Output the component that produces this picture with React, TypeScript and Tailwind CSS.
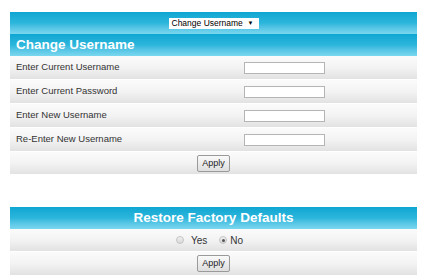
import { useState } from "react";

const rowBg = "bg-gradient-to-b from-[#fbfbfb] via-[#f3f3f3] to-[#e2e2e2] border-b border-white";
const barBg = "bg-gradient-to-b from-[#0ca6d2] via-[#2bb6dc] to-[#7bd7ef]";

const fields = [
  "Enter Current Username",
  "Enter Current Password",
  "Enter New Username",
  "Re-Enter New Username",
];

const ApplyButton = () => (
  <button
    type="button"
    className="h-[17px] px-[4px] text-[9px] text-[#222] border border-[#9a9a9a] rounded-[2px] bg-gradient-to-b from-[#fafafa] to-[#dedede] leading-none"
  >
    Apply
  </button>
);

const Radio = ({ checked }: { checked: boolean }) => (
  <span className="w-[8px] h-[8px] rounded-full border border-[#c4c4c4] bg-gradient-to-b from-[#f0f0f0] to-[#d8d8d8] flex items-center justify-center">
    {checked && <span className="w-[3px] h-[3px] rounded-full bg-[#555]" />}
  </span>
);

export default function App() {
  const [restore, setRestore] = useState("no");

  return (
    <div className="w-[431px] h-[280px] bg-white pt-[12px] pl-[10px] font-['Liberation_Sans',Arial,sans-serif] overflow-hidden">
      <div className="w-[407px]">
        {/* Page selector */}
        <div className={`h-[22px] flex items-center justify-center ${barBg}`}>
          <div className="w-[90px] h-[11px] bg-white flex items-center justify-between pl-[3px] pr-[5px] text-[8.5px] text-black leading-none">
            <span>Change Username</span>
            <span className="text-[6px]">▼</span>
          </div>
        </div>
        {/* Section title */}
        <div className={`h-[22px] flex items-center pl-[6px] ${barBg}`}>
          <span className="text-white font-bold text-[13.5px] leading-none">Change Username</span>
        </div>

        {fields.map((label) => (
          <div key={label} className={`h-[24px] flex items-center ${rowBg}`}>
            <span className="w-[234px] pl-[6px] text-[9.5px] text-[#333]">{label}</span>
            <input
              type={label.includes("Password") ? "password" : "text"}
              className="w-[81px] h-[12px] bg-white border border-[#b5b5b5] outline-none"
            />
          </div>
        ))}
        <div className={`h-[23px] flex items-center justify-center ${rowBg}`}>
          <ApplyButton />
        </div>

        {/* Restore Factory Defaults */}
        <div className={`mt-[32px] h-[22px] flex items-center justify-center ${barBg}`}>
          <span className="text-white font-bold text-[13.5px] leading-none">Restore Factory Defaults</span>
        </div>
        <div className={`h-[23px] flex items-center justify-center pr-[8px] text-[10px] text-[#333] ${rowBg}`}>
          <label className="flex items-center gap-[7px]" onClick={() => setRestore("yes")}>
            <Radio checked={restore === "yes"} />
            Yes
          </label>
          <label className="flex items-center gap-[3px] ml-[12px]" onClick={() => setRestore("no")}>
            <Radio checked={restore === "no"} />
            No
          </label>
        </div>
        <div className={`h-[24px] flex items-center justify-center ${rowBg}`}>
          <ApplyButton />
        </div>
      </div>
    </div>
  );
}
